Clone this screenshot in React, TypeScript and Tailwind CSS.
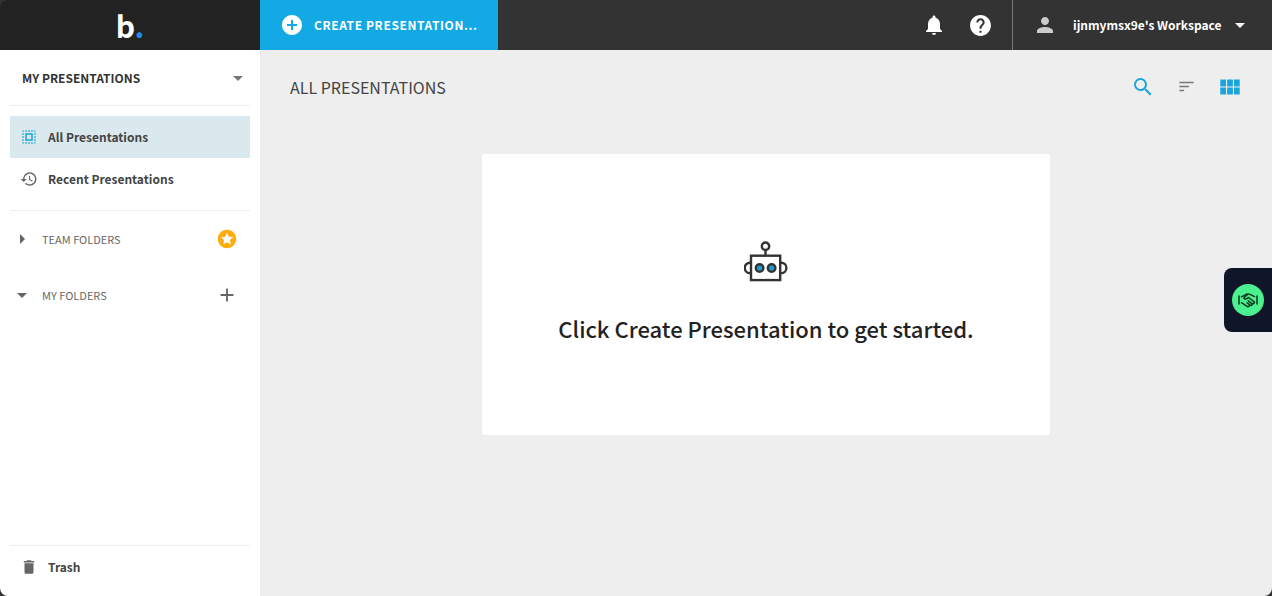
import type { ReactNode } from 'react';
import {
    MdAdd,
    MdAddCircle,
    MdArrowDropDown,
    MdArrowRight,
    MdDelete,
    MdHelp,
    MdHistory,
    MdNotifications,
    MdPerson,
    MdSearch,
    MdSelectAll,
    MdSort,
    MdStars,
    MdViewModule,
} from 'react-icons/md';

const Robot = () => (
    <svg width="44" height="42" viewBox="0 0 44 42" fill="none" stroke="#333" strokeWidth="2.4" aria-hidden="true">
        <circle cx="21.5" cy="5.2" r="3.7" />
        <path d="M21.5 9V14.5" />
        <rect x="7" y="14.7" width="29.2" height="24.4" />
        <path d="M7 21.7H6a5 5 0 0 0 0 10.4h1M36.2 21.7h1a5 5 0 0 1 0 10.4h-1" />
        <circle cx="15.6" cy="27" r="3.8" fill="#14a0cf" />
        <circle cx="27.6" cy="27" r="3.8" fill="#14a0cf" />
    </svg>
);

const Handshake = () => (
    <svg
        width="20"
        height="16"
        viewBox="0 0 20 16"
        fill="none"
        stroke="currentColor"
        strokeWidth="1.5"
        strokeLinecap="round"
        strokeLinejoin="round"
        aria-hidden="true"
    >
        <path d="M1 4v8M19 4v8" />
        <path d="M3.5 4.8 9 1.8M3.5 10.6l5.2 3.6c.9.6 1.9.5 2.6-.3" />
        <path d="M16.5 4.6 12 2.3c-.8-.4-1.6-.3-2.3.2L6.3 5.2c-.5.5-.5 1.2.1 1.6.6.4 1.2.3 1.8 0l2.4-1.3 5.1 4c.7.6.7 1.4.1 1.9-.5.4-1.2.4-1.8 0" />
        <path d="m10.2 8.8 3.6 2.8c.5.5.4 1.2-.1 1.6-.5.4-1.1.3-1.6 0l-3-2.3M16.5 10.2l-.8-.7" />
    </svg>
);

type NavItemProps = { icon: ReactNode; label: string; active?: boolean };

const NavItem = ({ icon, label, active }: NavItemProps) => (
    <a
        href="#"
        aria-current={active ? 'page' : undefined}
        className={`flex h-[42px] items-center gap-2.5 pl-2.5 text-[12px] font-bold text-[#444] ${
            active ? 'bg-[#dae9ee]' : ''
        }`}
    >
        {icon}
        {label}
    </a>
);

const Header = () => (
    <header className="flex h-[50px] bg-[#333] text-white">
        <a href="#" aria-label="Home" className="flex w-[260px] items-center justify-center bg-[#222]">
            <span className="text-[30px] leading-[46px] font-bold">
                b<span className="text-[#1f8ceb]">.</span>
            </span>
        </a>
        <button
            type="button"
            className="flex w-[238px] items-center gap-2.5 bg-[#12a9e5] pl-5 text-[12px] font-bold tracking-wider whitespace-nowrap"
        >
            <MdAddCircle size={24} />
            CREATE PRESENTATION...
        </button>
        <div className="ml-auto flex items-center gap-[22px] pr-[19px]">
            <button type="button" aria-label="Notifications">
                <MdNotifications size={24} />
            </button>
            <button type="button" aria-label="Help">
                <MdHelp size={25} />
            </button>
        </div>
        <button
            type="button"
            className="flex w-[260px] items-center justify-between border-l border-[#777] pr-5 pl-5 text-[12px] font-bold"
        >
            <span className="flex items-center gap-4">
                <MdPerson size={24} className="text-[#ccc]" />
                ijnmymsx9e's Workspace
            </span>
            <MdArrowDropDown size={24} />
        </button>
    </header>
);

const Sidebar = () => (
    <aside className="flex w-[260px] flex-col bg-white px-2.5 text-[#444]">
        <button
            type="button"
            className="flex h-14 items-center justify-between border-b border-[#eee] pl-3 text-[12px] font-bold text-[#333]"
        >
            MY PRESENTATIONS
            <MdArrowDropDown size={24} className="text-[#777]" />
        </button>
        <nav className="border-b border-[#eee] py-2.5">
            <NavItem icon={<MdSelectAll size={18} className="text-[#1ba4dc]" />} label="All Presentations" active />
            <NavItem icon={<MdHistory size={18} className="text-[#666]" />} label="Recent Presentations" />
        </nav>
        <div className="flex h-14 items-center justify-between pr-3 text-[11px] text-[#666]">
            <button type="button" className="flex items-center gap-2">
                <MdArrowRight size={24} />
                TEAM FOLDERS
            </button>
            <MdStars size={22} className="text-[#ffab09]" />
        </div>
        <div className="flex h-14 items-center justify-between pr-3 text-[11px] text-[#666]">
            <button type="button" className="flex items-center gap-2">
                <MdArrowDropDown size={24} />
                MY FOLDERS
            </button>
            <button type="button" aria-label="Add folder">
                <MdAdd size={22} />
            </button>
        </div>
        <div className="mt-auto border-t border-[#eee] pb-2">
            <NavItem icon={<MdDelete size={18} className="text-[#666]" />} label="Trash" />
        </div>
    </aside>
);

const App = () => {
    return (
        <div className="bg-[#333] font-['Noto_Sans_CJK_JP','Noto_Sans',sans-serif]">
            <div className="flex min-h-screen flex-col overflow-hidden rounded-lg">
                <Header />
                <div className="flex flex-1">
                    <Sidebar />
                    <main className="flex-1 bg-[#eee]">
                        <div className="flex h-[73px] items-center justify-between pr-[29px] pl-[30px]">
                            <h1 className="text-base text-[#444]">ALL PRESENTATIONS</h1>
                            <div className="flex items-center gap-5">
                                <button type="button" aria-label="Search" className="p-px text-[#1ba4dc]">
                                    <MdSearch size={24} />
                                </button>
                                <button type="button" aria-label="Sort" className="p-px text-[#777]">
                                    <MdSort size={19} />
                                </button>
                                <button type="button" aria-label="Grid view" className="text-[#1ba4dc]">
                                    <MdViewModule size={26} />
                                </button>
                            </div>
                        </div>
                        <section className="mx-auto mt-[31px] flex max-w-[568px] flex-col items-center rounded-xs bg-white pt-[87px] pb-[91px]">
                            <Robot />
                            <p className="mt-[29px] text-[22px] leading-8 font-medium text-[#222]">
                                Click Create Presentation to get started.
                            </p>
                        </section>
                    </main>
                </div>
            </div>
            <button
                type="button"
                aria-label="Offers"
                className="fixed top-[268px] right-0 flex h-16 w-12 items-center justify-center rounded-l-lg bg-[#0f1629]"
            >
                <span className="flex h-8 w-8 items-center justify-center rounded-full bg-[#4bf08f] text-[#0b3b1f]">
                    <Handshake />
                </span>
            </button>
        </div>
    );
};

export default App;
